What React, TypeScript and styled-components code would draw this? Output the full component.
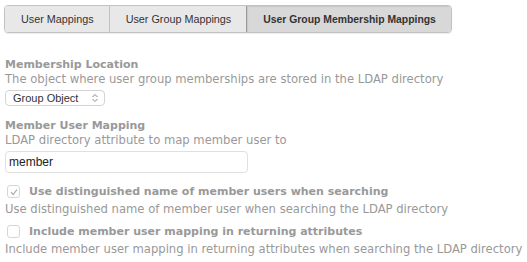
import React from 'react';
import styled, {createGlobalStyle} from "styled-components";

const Global = createGlobalStyle`
    body {
        margin: 0;
        background: #ffffff;
        font-family: "DejaVu Sans", "Liberation Sans", sans-serif;
    }
`

const tabs = ["User Mappings", "User Group Mappings", "User Group Membership Mappings"];

export default function App() {
    return (
        <Page>
            <Global/>
            <TabBar>
                {tabs.map((t, i) => (
                    <Tab key={t} $active={i === 2}>{t}</Tab>
                ))}
            </TabBar>
            <Form>
                <Field $space={24}>
                    <Label>Membership Location</Label>
                    <Hint>The object where user group memberships are stored in the LDAP directory</Hint>
                    <Select>
                        <span>Group Object</span>
                        <svg width="8" height="10" viewBox="0 0 8 10">
                            <path d="M1.5 4 L4 1.5 L6.5 4 M1.5 6 L4 8.5 L6.5 6" fill="none" stroke="#888" strokeWidth="1"/>
                        </svg>
                    </Select>
                </Field>
                <Field $space={12}>
                    <Label>Member User Mapping</Label>
                    <Hint>LDAP directory attribute to map member user to</Hint>
                    <TextInput defaultValue="member"/>
                </Field>
                <Field $space={8}>
                    <CheckRow>
                        <Box>
                            <svg width="10" height="10" viewBox="0 0 10 10">
                                <path d="M2 5.2 L4.2 7.5 L8 2.5" fill="none" stroke="#aaa" strokeWidth="1.2"/>
                            </svg>
                        </Box>
                        <Label>Use distinguished name of member users when searching</Label>
                    </CheckRow>
                    <Hint>Use distinguished name of member user when searching the LDAP directory</Hint>
                </Field>
                <Field $space={4}>
                    <CheckRow>
                        <Box/>
                        <Label>Include member user mapping in returning attributes</Label>
                    </CheckRow>
                    <Hint>Include member user mapping in returning attributes when searching the LDAP directory</Hint>
                </Field>
            </Form>
        </Page>
    );
}

const Page = styled.div`
    padding: 5px 4px;
`
const TabBar = styled.div`
    display: flex;
    width: fit-content;
    border: 1px solid #c2c2c2;
    border-radius: 4px;
    overflow: hidden;
    box-shadow: 0 1px 1px rgba(0, 0, 0, 0.08);
`
const Tab = styled.div<{ $active?: boolean }>`
    padding: 0 15px 0 16px;
    height: 26px;
    display: flex;
    align-items: center;
    white-space: nowrap;
    font-family: "Liberation Sans", sans-serif;
    font-size: ${p => p.$active ? "10.4px" : "10.8px"};
    font-weight: ${p => p.$active ? "bold" : "normal"};
    color: #333;
    background: ${p => p.$active ? "#d8d8d8" : "#e8e8e8"};
    border-left: 1px solid ${p => p.$active ? "#999" : "#c2c2c2"};
    box-shadow: ${p => p.$active ? "inset 1px 1px 1px rgba(0,0,0,0.08)" : "none"};
    &:first-child {
        border-left: none;
    }
`
const Form = styled.div`
    display: flex;
    flex-direction: column;
    padding-left: 1px;
`
const Field = styled.div<{ $space: number }>`
    display: flex;
    flex-direction: column;
    align-items: flex-start;
    margin-top: ${p => p.$space}px;
`
const Label = styled.div`
    font-size: 11px;
    font-weight: bold;
    color: #999;
    line-height: 15px;
    white-space: nowrap;
`
const Hint = styled.div`
    font-size: 11.6px;
    color: #999;
    line-height: 15px;
    white-space: nowrap;
`
const Select = styled.div`
    margin-top: 3px;
    width: 100px;
    height: 16px;
    box-sizing: border-box;
    border: 1px solid #d4d4d4;
    border-radius: 4px;
    display: flex;
    align-items: center;
    justify-content: space-between;
    padding: 0 5px 0 7px;
    font-family: "Liberation Sans", sans-serif;
    font-size: 11px;
    color: #333;
`
const TextInput = styled.input`
    margin-top: 3px;
    width: 243px;
    height: 22px;
    box-sizing: border-box;
    border: 1px solid #e0e0e0;
    border-radius: 4px;
    padding: 0 3px;
    font-family: "Liberation Sans", sans-serif;
    font-size: 12px;
    color: #222;
    outline: none;
`
const CheckRow = styled.div`
    display: flex;
    align-items: center;
    height: 21px;
    gap: 9px;
    padding-left: 2px;
`
const Box = styled.div`
    width: 13px;
    height: 13px;
    box-sizing: border-box;
    border: 1px solid #d6d6d6;
    border-radius: 3px;
    display: flex;
    align-items: center;
    justify-content: center;
`
